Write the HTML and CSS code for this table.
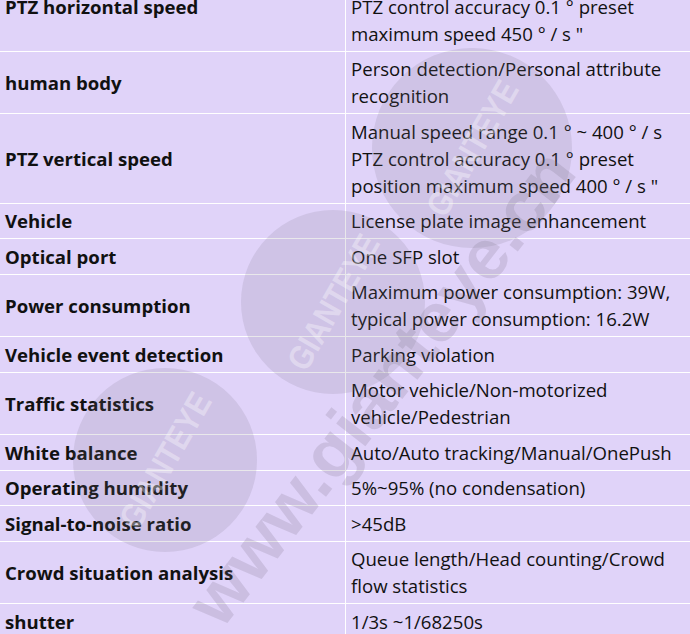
FILE: index.html
```html
<!DOCTYPE html>
<html>
<head>
<meta charset="utf-8">
<link rel="stylesheet" href="styles.css">
</head>
<body>
<div class="page">
<table class="spec">
<tr><th>PTZ horizontal speed</th><td>Manual speed range 0.1 ° ~ 300 ° / s<br>PTZ control accuracy 0.1 ° preset<br>maximum speed 450 ° / s "</td></tr>
<tr><th>human body</th><td>Person detection/Personal attribute<br>recognition</td></tr>
<tr><th>PTZ vertical speed</th><td>Manual speed range 0.1 ° ~ 400 ° / s<br>PTZ control accuracy 0.1 ° preset<br>position maximum speed 400 ° / s "</td></tr>
<tr><th>Vehicle</th><td>License plate image enhancement</td></tr>
<tr><th>Optical port</th><td>One SFP slot</td></tr>
<tr><th>Power consumption</th><td>Maximum power consumption: 39W,<br>typical power consumption: 16.2W</td></tr>
<tr><th>Vehicle event detection</th><td>Parking violation</td></tr>
<tr><th>Traffic statistics</th><td>Motor vehicle/Non-motorized<br>vehicle/Pedestrian</td></tr>
<tr><th>White balance</th><td>Auto/Auto tracking/Manual/OnePush</td></tr>
<tr><th>Operating humidity</th><td>5%~95% (no condensation)</td></tr>
<tr><th>Signal-to-noise ratio</th><td>&gt;45dB</td></tr>
<tr><th>Crowd situation analysis</th><td>Queue length/Head counting/Crowd<br>flow statistics</td></tr>
<tr><th>shutter</th><td>1/3s ~1/68250s</td></tr>
</table>
<svg class="watermark" width="690" height="700" viewBox="0 0 690 700">
  <g fill="rgba(120,110,130,0.16)">
    <circle cx="472" cy="186" r="100"/>
    <circle cx="333" cy="340" r="92"/>
    <circle cx="165" cy="498" r="92"/>
  </g>
  <g fill="rgba(255,255,255,0.35)" font-family="Liberation Sans, sans-serif" font-weight="bold" font-size="34">
    <text transform="translate(472 186) rotate(-60)" text-anchor="middle" dy="12" textLength="150" lengthAdjust="spacingAndGlyphs">GIANTEYE</text>
    <text transform="translate(333 340) rotate(-60)" text-anchor="middle" dy="12" textLength="150" lengthAdjust="spacingAndGlyphs">GIANTEYE</text>
    <text transform="translate(165 498) rotate(-60)" text-anchor="middle" dy="12" textLength="150" lengthAdjust="spacingAndGlyphs">GIANTEYE</text>
  </g>
  <text transform="translate(400 440) rotate(-52)" text-anchor="middle" font-family="Liberation Sans, sans-serif" font-weight="bold" font-size="70" fill="rgba(120,110,130,0.2)" textLength="580" lengthAdjust="spacingAndGlyphs">www.gianteye.cn</text>
</svg>
</div>
</body>
</html>
```
FILE: styles.css
```css
html, body {
  margin: 0;
  padding: 0;
  background: #e0d3f9;
}
.page {
  position: relative;
  width: 690px;
  margin-top: -38px;
  overflow: hidden;
}
.spec {
  width: 690px;
  border-collapse: collapse;
  table-layout: fixed;
  font-family: "Open Sans", "Noto Sans", sans-serif;
  font-size: 18.6px;
  color: #111;
  background: #e0d3f9;
}
.spec th, .spec td {
  border-top: 1px solid #fff;
  border-bottom: 1px solid #fff;
  border-left: none;
  border-right: none;
  padding: 3.75px 5px;
  line-height: 27px;
  vertical-align: middle;
  text-align: left;
  white-space: nowrap;
}
.spec tr:first-child th, .spec tr:first-child td { border-top: none; }
.spec td { border-left: 1px solid #fff; }
.spec th {
  width: 335px;
  font-weight: bold;
  color: #111;
}
.watermark {
  position: absolute;
  left: 0;
  top: 0;
  pointer-events: none;
}
```
